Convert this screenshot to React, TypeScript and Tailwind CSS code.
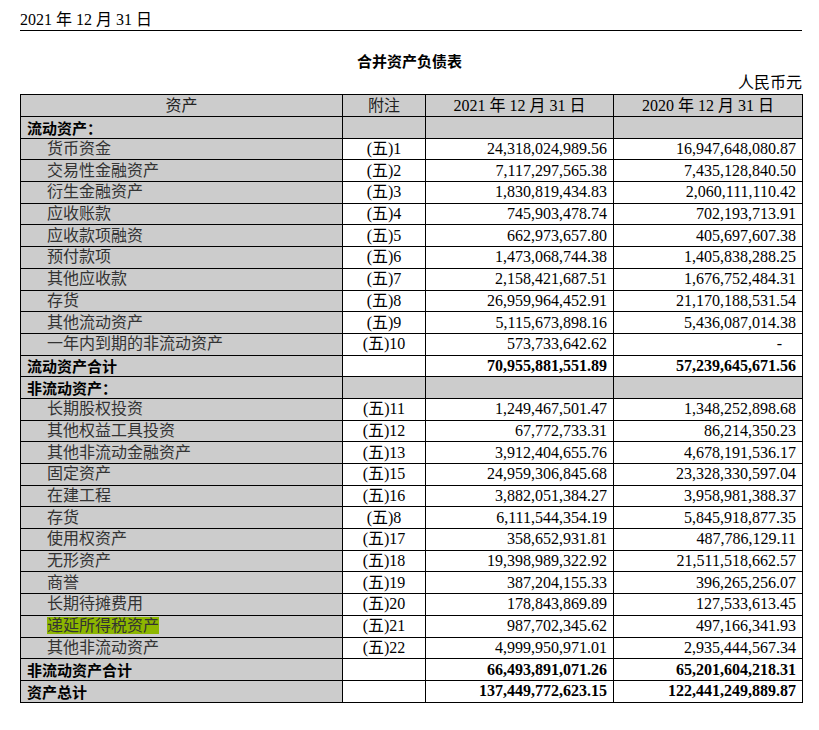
import React from "react";

type R = { l: string; n?: string; a?: string; b?: string; t?: "sec" | "tot"; hl?: boolean };
const rows: R[] = [
  { l: "流动资产：", t: "sec" },
  { l: "货币资金", n: "1", a: "24,318,024,989.56", b: "16,947,648,080.87" },
  { l: "交易性金融资产", n: "2", a: "7,117,297,565.38", b: "7,435,128,840.50" },
  { l: "衍生金融资产", n: "3", a: "1,830,819,434.83", b: "2,060,111,110.42" },
  { l: "应收账款", n: "4", a: "745,903,478.74", b: "702,193,713.91" },
  { l: "应收款项融资", n: "5", a: "662,973,657.80", b: "405,697,607.38" },
  { l: "预付款项", n: "6", a: "1,473,068,744.38", b: "1,405,838,288.25" },
  { l: "其他应收款", n: "7", a: "2,158,421,687.51", b: "1,676,752,484.31" },
  { l: "存货", n: "8", a: "26,959,964,452.91", b: "21,170,188,531.54" },
  { l: "其他流动资产", n: "9", a: "5,115,673,898.16", b: "5,436,087,014.38" },
  { l: "一年内到期的非流动资产", n: "10", a: "573,733,642.62", b: "-" },
  { l: "流动资产合计", t: "tot", a: "70,955,881,551.89", b: "57,239,645,671.56" },
  { l: "非流动资产：", t: "sec" },
  { l: "长期股权投资", n: "11", a: "1,249,467,501.47", b: "1,348,252,898.68" },
  { l: "其他权益工具投资", n: "12", a: "67,772,733.31", b: "86,214,350.23" },
  { l: "其他非流动金融资产", n: "13", a: "3,912,404,655.76", b: "4,678,191,536.17" },
  { l: "固定资产", n: "15", a: "24,959,306,845.68", b: "23,328,330,597.04" },
  { l: "在建工程", n: "16", a: "3,882,051,384.27", b: "3,958,981,388.37" },
  { l: "存货", n: "8", a: "6,111,544,354.19", b: "5,845,918,877.35" },
  { l: "使用权资产", n: "17", a: "358,652,931.81", b: "487,786,129.11" },
  { l: "无形资产", n: "18", a: "19,398,989,322.92", b: "21,511,518,662.57" },
  { l: "商誉", n: "19", a: "387,204,155.33", b: "396,265,256.07" },
  { l: "长期待摊费用", n: "20", a: "178,843,869.89", b: "127,533,613.45" },
  { l: "递延所得税资产", n: "21", a: "987,702,345.62", b: "497,166,341.93", hl: true },
  { l: "其他非流动资产", n: "22", a: "4,999,950,971.01", b: "2,935,444,567.34" },
  { l: "非流动资产合计", t: "tot", a: "66,493,891,071.26", b: "65,201,604,218.31" },
  { l: "资产总计", t: "tot", a: "137,449,772,623.15", b: "122,441,249,889.87" },
];

const serif = { fontFamily: '"Liberation Serif", "Noto Sans CJK SC", serif' } as React.CSSProperties;

export default function App() {
  return (
    <div className="w-[819px] h-[730px] bg-white text-black text-[16px] leading-none" style={serif}>
      <div className="ml-[20px] mr-[17px] pt-[12px] border-b border-black pb-[2px]">2021 年 12 月 31 日</div>
      <div className="text-center font-bold mt-[22px] text-[15px]" style={{ fontFamily: '"Noto Sans CJK SC", sans-serif' }}>合并资产负债表</div>
      <div className="text-right mr-[17px] mt-[7px] mb-[3px]">人民币元</div>
      <table className="ml-[20px] w-[782px] border-collapse border border-black table-fixed">
        <colgroup>
          <col className="w-[322px]" />
          <col className="w-[83px]" />
          <col className="w-[188px]" />
          <col className="w-[189px]" />
        </colgroup>
        <tbody>
          <tr className="h-[22px] bg-[#cccccc]">
            <td className="border border-black text-center text-[#222]">资产</td>
            <td className="border border-black text-center text-[#222]">附注</td>
            <td className="border border-black text-center">2021 年 12 月 31 日</td>
            <td className="border border-black text-center">2020 年 12 月 31 日</td>
          </tr>
          {rows.map((r, i) => {
            const bold = r.t === "sec" || r.t === "tot";
            const other = r.t === "sec" ? "bg-[#cccccc]" : "bg-white";
            return (
              <tr key={i} className="h-[21.7px]">
                <td className={"border border-black bg-[#cccccc] " + (bold ? "pl-[6px] font-bold" : "pl-[26px] text-[#333]")}
                  style={bold ? { fontFamily: '"Noto Sans CJK SC", sans-serif', fontSize: 15 } : undefined}>
                  {r.hl ? <span className="bg-[#8db600]">{r.l}</span> : r.l}
                </td>
                <td className={"border border-black text-center " + other}>{r.n ? "(五)" + r.n : ""}</td>
                <td className={"border border-black text-right pr-[6px] " + other + (bold ? " font-bold" : "")}>{r.a ?? ""}</td>
                <td className={"border border-black text-right pr-[6px] " + other + (bold ? " font-bold" : "") + (r.b === "-" ? " pr-[20px]" : "")}>{r.b ?? ""}</td>
              </tr>
            );
          })}
        </tbody>
      </table>
    </div>
  );
}
